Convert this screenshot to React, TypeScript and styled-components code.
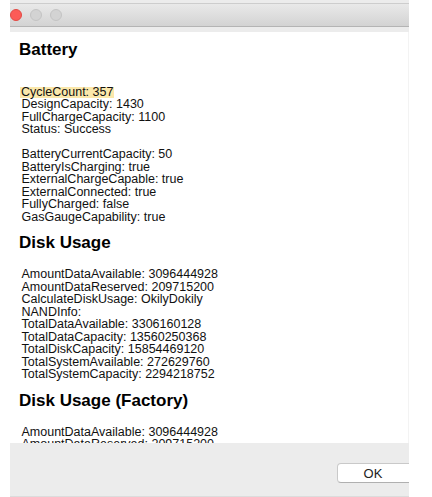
import styled, { createGlobalStyle } from 'styled-components';

const GlobalStyle = createGlobalStyle`
  html, body {
    margin: 0;
    padding: 0;
    background: #ffffff;
  }
  body {
    font-family: "Liberation Sans", Helvetica, Arial, sans-serif;
    color: #111;
  }
`;

type Section = {
  title: string;
  lines: string[];
  highlight?: string;
};

const sections: Section[] = [
  {
    title: 'Battery',
    highlight: 'CycleCount: 357',
    lines: [
      '',
      'CycleCount: 357',
      'DesignCapacity: 1430',
      'FullChargeCapacity: 1100',
      'Status: Success',
      '',
      'BatteryCurrentCapacity: 50',
      'BatteryIsCharging: true',
      'ExternalChargeCapable: true',
      'ExternalConnected: true',
      'FullyCharged: false',
      'GasGaugeCapability: true',
    ],
  },
  {
    title: 'Disk Usage',
    lines: [
      'AmountDataAvailable: 3096444928',
      'AmountDataReserved: 209715200',
      'CalculateDiskUsage: OkilyDokily',
      'NANDInfo:',
      'TotalDataAvailable: 3306160128',
      'TotalDataCapacity: 13560250368',
      'TotalDiskCapacity: 15854469120',
      'TotalSystemAvailable: 272629760',
      'TotalSystemCapacity: 2294218752',
    ],
  },
  {
    title: 'Disk Usage (Factory)',
    lines: [
      'AmountDataAvailable: 3096444928',
      'AmountDataReserved: 209715200',
      'CalculateDiskUsage: OkilyDokily',
      'NANDInfo:',
    ],
  },
];

const Page = styled.div`
  width: 432px;
  height: 497px;
  overflow: hidden;
  display: flex;
`;

const Window = styled.div`
  margin-left: 10px;
  width: 399px;
  height: 497px;
  display: flex;
  flex-direction: column;
`;

const TitleArea = styled.div`
  background: #ececec;
  padding: 3px 0 5px;
`;

const TitleBar = styled.div`
  height: 22px;
  border-top: 1px solid #cdcdcd;
  border-bottom: 1px solid #b4b4b4;
  background: linear-gradient(#e9e9e9, #d3d3d3);
  display: flex;
  align-items: center;
  gap: 8px;
`;

const Light = styled.span<{ $color: string; $ring: string }>`
  width: 10px;
  height: 10px;
  border-radius: 50%;
  background: ${(p) => p.$color};
  border: 1px solid ${(p) => p.$ring};
`;

const Content = styled.div`
  flex: 1;
  overflow: hidden;
  background: #ffffff;
  border-right: 1px solid #f3f3f3;
  padding-left: 9px;
`;

const Heading = styled.h2<{ $first?: boolean }>`
  margin: ${(p) => (p.$first ? '8px 0 13px' : '10px 0 15px')};
  font-size: 17px;
  line-height: 20px;
  font-weight: bold;
  color: #000;
`;

const Line = styled.div`
  padding-left: 2.5px;
  font-size: 12.5px;
  line-height: 12.5px;
  height: 12.5px;
  white-space: nowrap;
`;

const Marked = styled.span`
  display: inline-block;
  background: #fbe8ab;
  line-height: 11.5px;
  padding: 0 1px;
  margin-left: -1.5px;
`;

const Footer = styled.div`
  height: 54px;
  box-sizing: border-box;
  background: #ececec;
  border-bottom: 1px solid #dcdcdc;
  display: flex;
  justify-content: flex-end;
  align-items: flex-start;
  padding-top: 20px;
  overflow: hidden;
`;

const Button = styled.button`
  width: 82px;
  height: 20px;
  margin-right: -10px;
  background: #ffffff;
  border: 1px solid #c9c9c9;
  border-bottom-color: #b0b0b0;
  border-radius: 4px;
  font-family: "Liberation Sans", Helvetica, Arial, sans-serif;
  font-size: 13px;
  color: #222;
  padding: 0 10px 0 0;
`;

const App = () => {
  return (
    <Page>
      <GlobalStyle />
      <Window>
        <TitleArea>
          <TitleBar>
            <Light $color="#fc5b57" $ring="#e24a44" />
            <Light $color="#d3d3d3" $ring="#c4c4c4" />
            <Light $color="#d3d3d3" $ring="#c4c4c4" />
          </TitleBar>
        </TitleArea>
        <Content>
          {sections.map((section, idx) => (
            <div key={section.title}>
              <Heading $first={idx === 0}>{section.title}</Heading>
              {section.lines.map((line, i) => (
                <Line key={i}>
                  {line === '' ? '\u00a0' : line === section.highlight ? <Marked>{line}</Marked> : line}
                </Line>
              ))}
            </div>
          ))}
        </Content>
        <Footer>
          <Button>OK</Button>
        </Footer>
      </Window>
    </Page>
  );
};

export default App;
